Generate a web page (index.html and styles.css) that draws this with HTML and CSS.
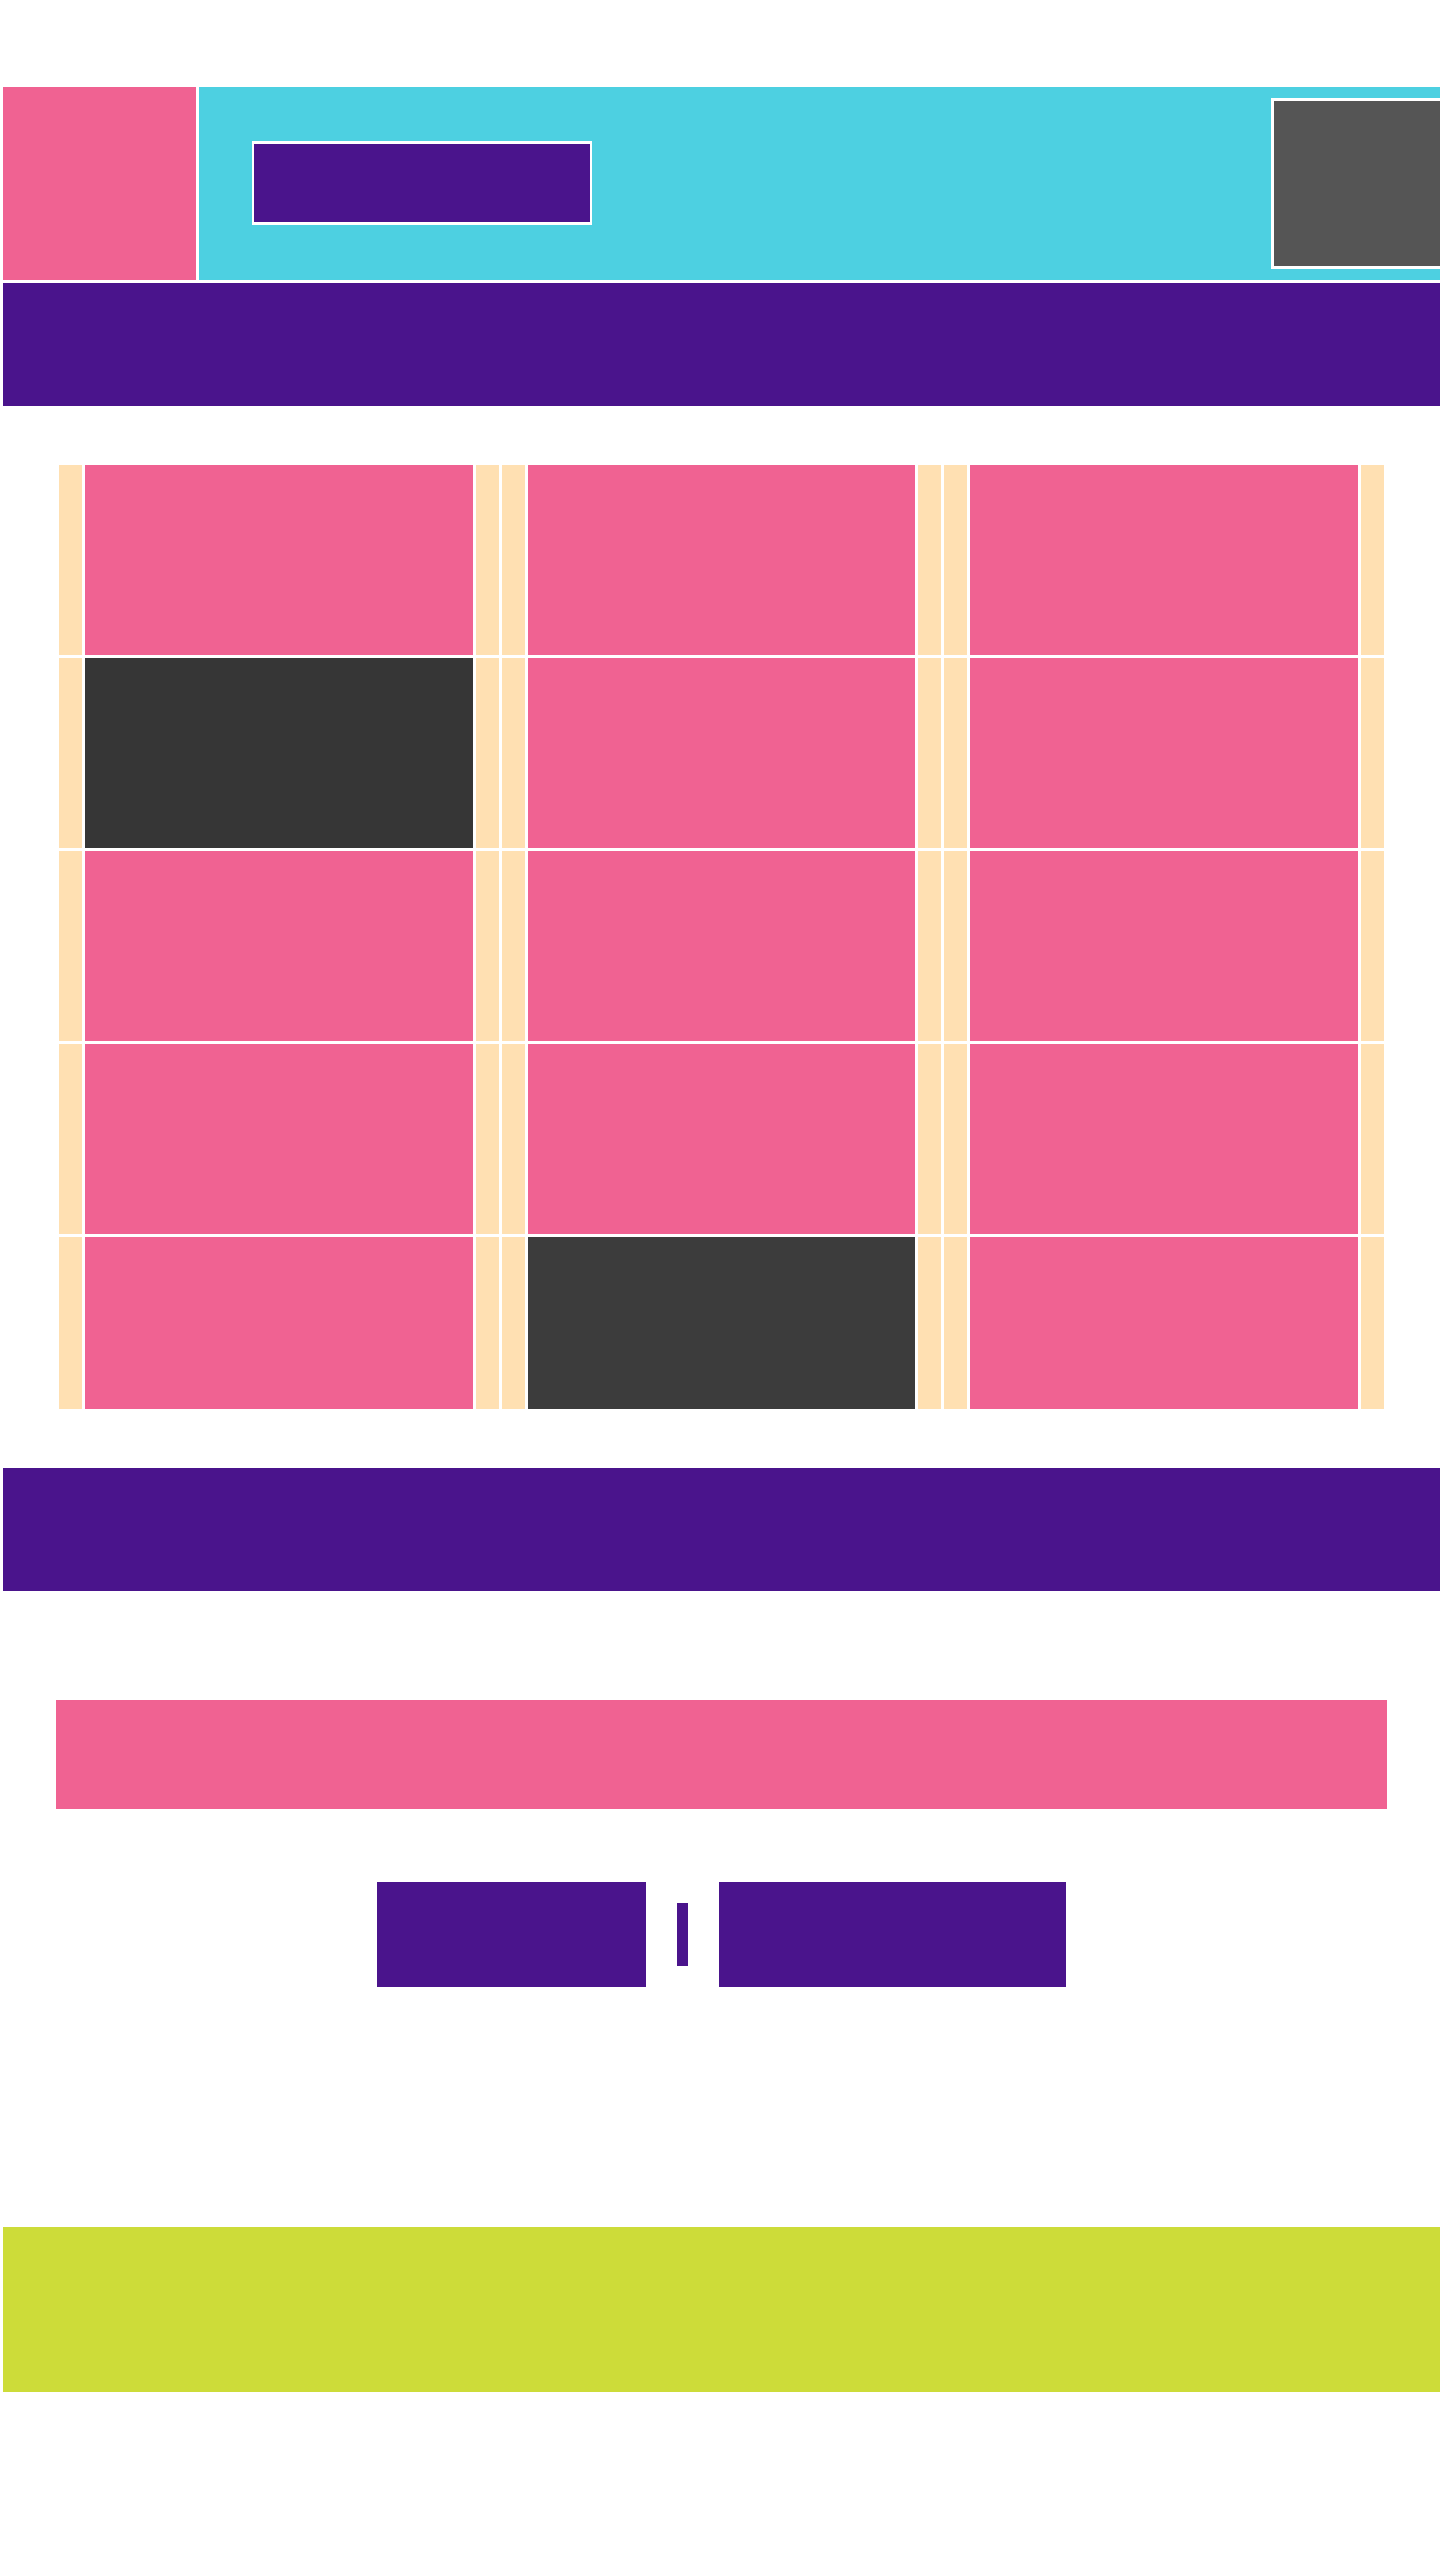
FILE: index.html
```html
<!DOCTYPE html>
<html lang="en">
<head>
  <meta charset="UTF-8" />
  <meta name="viewport" content="width=device-width, initial-scale=1.0"/>
  <title>Board</title>
  <link rel="stylesheet" href="styles.css">
</head>
<body>
  <header class="top">
    <div class="logo"></div>
    <div class="banner">
      <a class="banner-btn" href="#"></a>
      <div class="profile"></div>
    </div>
  </header>

  <nav class="menu"></nav>

  <div class="board">
    <div class="tile"><span class="edge"></span><span class="face"></span><span class="edge"></span></div>
    <div class="tile"><span class="edge"></span><span class="face"></span><span class="edge"></span></div>
    <div class="tile"><span class="edge"></span><span class="face"></span><span class="edge"></span></div>

    <div class="tile"><span class="edge"></span><span class="face dark"></span><span class="edge"></span></div>
    <div class="tile"><span class="edge"></span><span class="face"></span><span class="edge"></span></div>
    <div class="tile"><span class="edge"></span><span class="face"></span><span class="edge"></span></div>

    <div class="tile"><span class="edge"></span><span class="face"></span><span class="edge"></span></div>
    <div class="tile"><span class="edge"></span><span class="face"></span><span class="edge"></span></div>
    <div class="tile"><span class="edge"></span><span class="face"></span><span class="edge"></span></div>

    <div class="tile"><span class="edge"></span><span class="face"></span><span class="edge"></span></div>
    <div class="tile"><span class="edge"></span><span class="face"></span><span class="edge"></span></div>
    <div class="tile"><span class="edge"></span><span class="face"></span><span class="edge"></span></div>

    <div class="tile"><span class="edge"></span><span class="face"></span><span class="edge"></span></div>
    <div class="tile"><span class="edge"></span><span class="face darker"></span><span class="edge"></span></div>
    <div class="tile"><span class="edge"></span><span class="face"></span><span class="edge"></span></div>
  </div>

  <div class="band"></div>

  <div class="notice"></div>

  <div class="actions">
    <a class="btn" href="#"></a>
    <span class="divider"></span>
    <a class="btn wide" href="#"></a>
  </div>

  <footer class="footer"></footer>
</body>
</html>
```

FILE: styles.css
```css
html {
  overflow-x: hidden;
}

body {
  font-family: "Liberation Sans", Arial, sans-serif;
  background-color: #fff;
  margin: 0 0 0 3px;
  padding: 87px 0 160px;
}

.top {
  display: flex;
  height: 193px;
  background-color: #4dd0e1;
  overflow: hidden;
}

.logo {
  width: 193px;
  flex-shrink: 0;
  background-color: #f06292;
  border-right: 3px solid #fff;
}

.banner {
  display: flex;
  align-items: flex-start;
  padding-left: 53px;
}

.banner-btn {
  display: block;
  flex-shrink: 0;
  width: 336px;
  height: 78px;
  margin-top: 54px;
  margin-right: 679px;
  background-color: #4a148c;
  border: 2px solid #fff;
  border-width: 3px 2px;
}

.profile {
  flex-shrink: 0;
  width: 200px;
  height: 165px;
  margin-top: 11px;
  background-color: #555;
  border: 3px solid #fff;
}

.menu {
  height: 123px;
  margin-top: 3px;
  background-color: #4a148c;
}

.board {
  display: grid;
  grid-template-columns: repeat(3, 1fr);
  grid-template-rows: repeat(4, 190px) 172px;
  gap: 3px;
  margin: 59px 56px 0;
}

.tile {
  display: flex;
  gap: 3px;
  background-color: #fff;
}

.edge {
  width: 23px;
  flex-shrink: 0;
  background-color: #ffe0b2;
}

.face {
  flex: 1;
  background-color: #f06292;
}

.face.dark {
  background-color: #363636;
}

.face.darker {
  background-color: #3c3c3c;
}

.band {
  height: 123px;
  margin-top: 59px;
  background-color: #4a148c;
}

.notice {
  height: 109px;
  margin: 109px 53px 0;
  background-color: #f06292;
}

.actions {
  display: flex;
  justify-content: center;
  align-items: center;
  gap: 31px;
  margin-top: 73px;
}

.btn {
  display: block;
  width: 269px;
  height: 105px;
  background-color: #4a148c;
}

.btn.wide {
  width: 347px;
}

.divider {
  width: 11px;
  height: 63px;
  background-color: #4a148c;
}

.footer {
  height: 165px;
  margin-top: 240px;
  background-color: #cddc39;
}
```
